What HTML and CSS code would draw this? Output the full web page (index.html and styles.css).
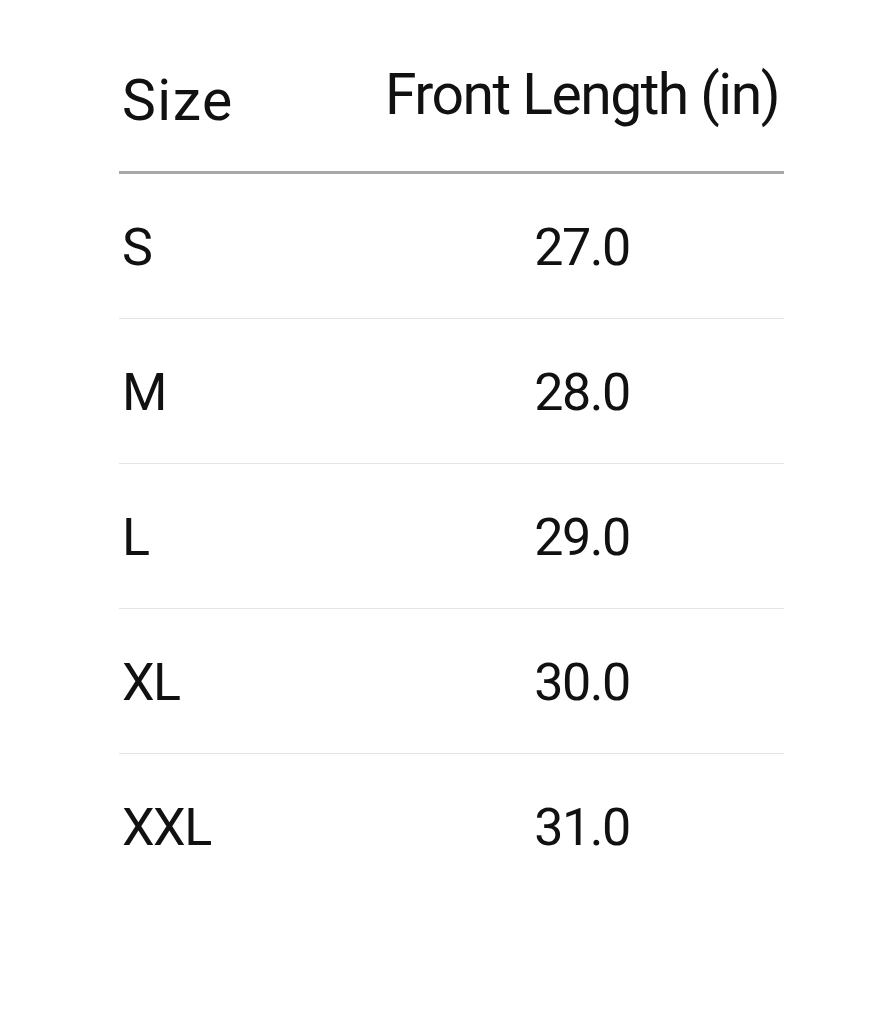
FILE: index.html
```html
<!DOCTYPE html>
<html lang="en">
<head>
<meta charset="utf-8">
<title>Size chart</title>
<link rel="stylesheet" href="styles.css">
</head>
<body>
<div class="page">
  <table class="chart">
    <thead>
      <tr>
        <th class="col-size head-size">Size</th>
        <th class="col-val head-val">Front Length (in)</th>
      </tr>
    </thead>
    <tbody>
      <tr><td class="col-size">S</td><td class="col-val">27.0</td></tr>
      <tr><td class="col-size">M</td><td class="col-val">28.0</td></tr>
      <tr><td class="col-size">L</td><td class="col-val">29.0</td></tr>
      <tr><td class="col-size">XL</td><td class="col-val">30.0</td></tr>
      <tr><td class="col-size">XXL</td><td class="col-val">31.0</td></tr>
    </tbody>
  </table>
</div>
</body>
</html>
```

FILE: styles.css
```css
html, body {
  margin: 0;
  padding: 0;
  background: #ffffff;
}

.page {
  padding-left: 119px;
  font-family: Roboto, "Noto Sans", sans-serif;
  color: #111111;
}

.chart {
  width: 665px;
  border-collapse: collapse;
  table-layout: fixed;
}

.col-size {
  width: 261px;
  text-align: left;
  padding-left: 3px;
}

.col-val {
  text-align: center;
  white-space: nowrap;
}

th {
  font-weight: 400;
  font-size: 57px;
  line-height: 57px;
  letter-spacing: -1.5px;
  vertical-align: top;
  border-bottom: 3px solid #a8a8a8;
  padding-bottom: 0;
  height: 172px;
  box-sizing: border-box;
}

.head-size {
  padding-top: 72px;
  letter-spacing: 1.5px;
}

.head-val {
  padding-top: 66px;
}

td {
  font-size: 52px;
  line-height: 52px;
  letter-spacing: -1.5px;
  padding-top: 48px;
  padding-bottom: 44px;
  border-bottom: 1px solid #e4e4e4;
}

tbody tr:last-child td {
  border-bottom: none;
}
```
